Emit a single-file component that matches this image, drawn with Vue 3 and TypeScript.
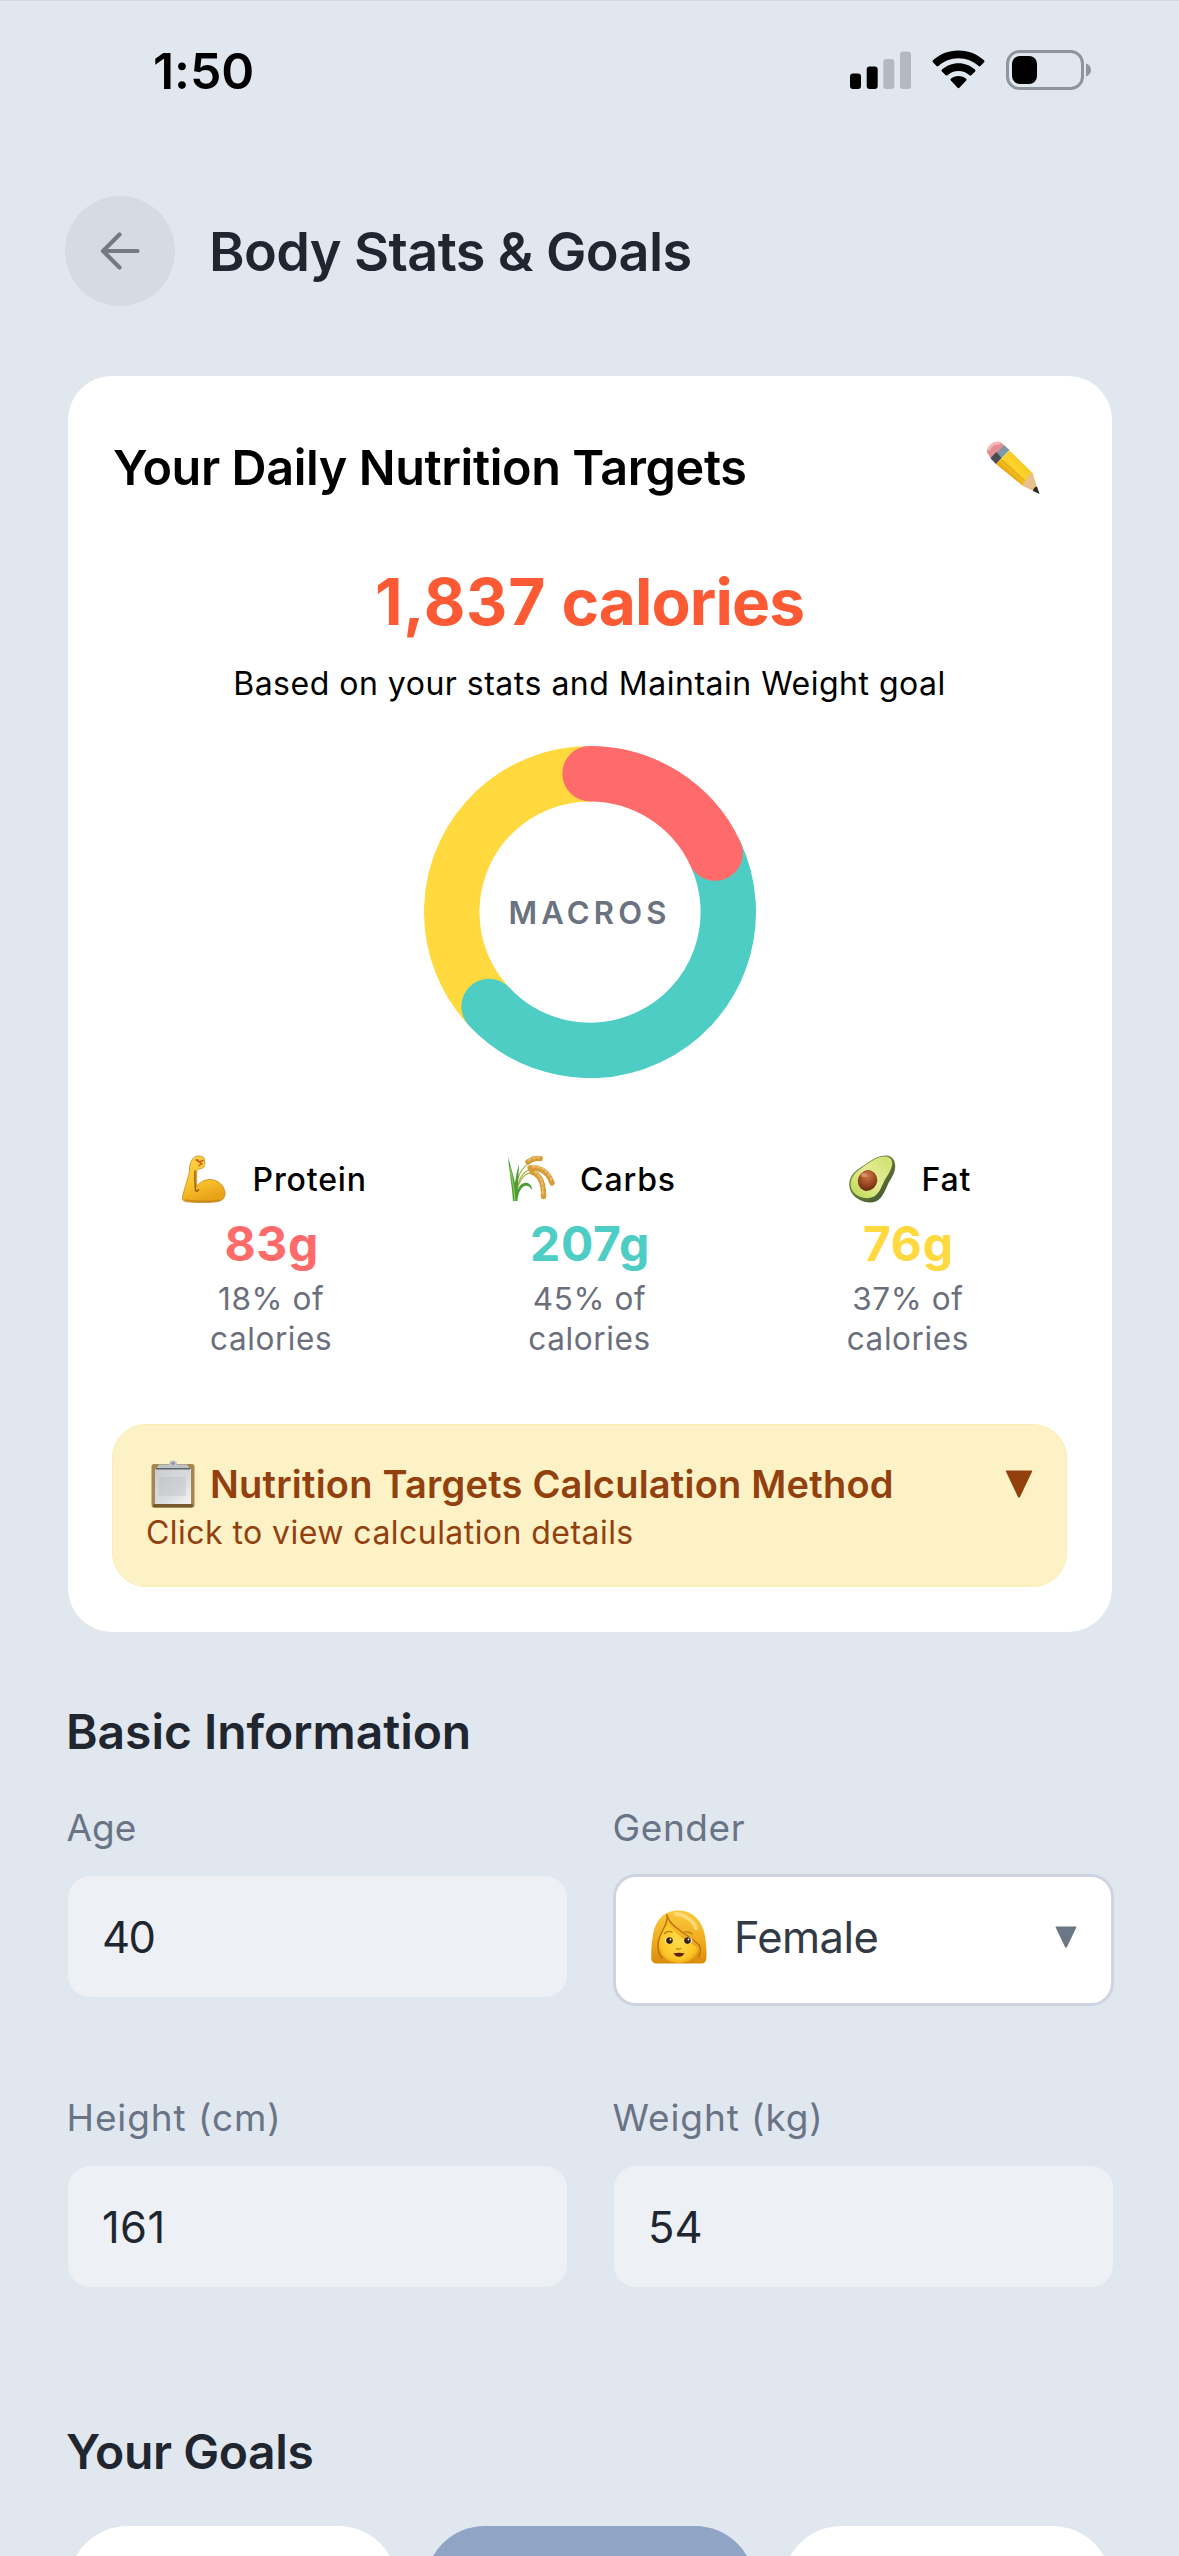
<script setup lang="ts">
interface Macro {
  key: 'protein' | 'carbs' | 'fat'
  label: string
  grams: number
  percent: number
  color: string
}

const macros: Macro[] = [
  { key: 'protein', label: 'Protein', grams: 83, percent: 18, color: '#ff6b6b' },
  { key: 'carbs', label: 'Carbs', grams: 207, percent: 45, color: '#4ecdc4' },
  { key: 'fat', label: 'Fat', grams: 76, percent: 37, color: '#ffd93d' },
]

const radius = 138.3
const circumference = 2 * Math.PI * radius

// Later segments are painted first so each rounded end overlaps the next segment.
const segments = macros
  .map((m, i) => {
    const before = macros.slice(0, i).reduce((sum, x) => sum + x.percent, 0)
    return {
      color: m.color,
      dash: `${(m.percent / 100) * circumference} ${circumference}`,
      rotate: -90 + before * 3.6,
    }
  })
  .reverse()

const goals = [
  { id: 'lose', active: false },
  { id: 'maintain', active: true },
  { id: 'gain', active: false },
]
</script>

<template>
  <div class="screen">
    <div class="status">
      <span class="time">1:50</span>
      <div class="status-icons">
        <svg class="signal" width="61" height="38" viewBox="0 0 61 38">
          <rect x="0" y="22.5" width="11" height="15.5" rx="3" fill="#000" />
          <rect x="16.7" y="15.5" width="11" height="22.5" rx="3" fill="#000" />
          <rect x="33.3" y="8" width="11" height="30" rx="3" fill="#b3b9c1" />
          <rect x="50" y="0.5" width="11" height="37.5" rx="3" fill="#b3b9c1" />
        </svg>
        <svg class="wifi" width="53" height="39" viewBox="0 0 53 39">
          <path d="M26.500 .5C36.500 .5 45.500 4.200 52 10.300c.6.600.6 1.300.1 1.900l-3.700 3.800c-.5.500-1.200.5-1.800 0C41.300 11.100 34.300 8.200 26.500 8.200S11.700 11.100 6.400 16c-.6.5-1.300.5-1.800 0L.9 12.200c-.5-.6-.5-1.300.1-1.900C7.500 4.200 16.500.5 26.500.5z" />
          <path d="M26.500 13.200c6.300 0 12.100 2.400 16.500 6.300.6.600.6 1.300.1 1.900l-3.800 3.800c-.5.500-1.200.5-1.800 0-2.900-2.600-6.800-4.200-11-4.200s-8.100 1.600-11 4.200c-.6.500-1.300.5-1.800 0l-3.800-3.800c-.5-.6-.5-1.300.1-1.900 4.400-3.900 10.200-6.300 16.500-6.300z" />
          <path d="M26.500 26c2.900 0 5.500 1 7.600 2.700.6.500.6 1.200.1 1.800l-6.800 7.300c-.5.600-1.300.6-1.800 0l-6.800-7.300c-.5-.6-.5-1.300.1-1.800 2.100-1.700 4.700-2.700 7.600-2.700z" />
        </svg>
        <svg class="battery" width="86" height="40" viewBox="0 0 86 40">
          <rect x="1.500" y="1.500" width="75" height="37" rx="12" fill="none" stroke="#8f959d" stroke-width="3" />
          <rect x="6" y="6" width="25" height="28" rx="8" fill="#000" />
          <path d="M80 13.500c3 1 5 3.500 5 6.500s-2 5.500-5 6.500z" fill="#8f959d" />
        </svg>
      </div>
    </div>

    <header class="header">
      <button class="back" aria-label="Back">
        <svg width="40" height="40" viewBox="0 0 40 40" fill="none" stroke="#737a83" stroke-width="4.200" stroke-linecap="round" stroke-linejoin="round">
          <path d="M37.500 20H3.500M19.500 3.500L3 20l16.500 16.500" />
        </svg>
      </button>
      <h1 class="title">Body Stats &amp; Goals</h1>
    </header>

    <section class="card">
      <div class="card-head">
        <h2 class="card-title">Your Daily Nutrition Targets</h2>
        <svg class="pencil" width="56" height="56" viewBox="0 0 56 56">
          <defs>
            <linearGradient id="pcBody" x1="0" y1="1" x2="1" y2="0">
              <stop offset="0" stop-color="#c98d0c" />
              <stop offset=".35" stop-color="#eaa90f" />
              <stop offset=".5" stop-color="#fbd32c" />
              <stop offset="1" stop-color="#f0bb14" />
            </linearGradient>
          </defs>
          <path d="M3 14C-1 9 8 0 15 2l5 4L7 20z" fill="#e58d90" />
          <path d="M4 9c2-4 6-6 10-6" stroke="#f6b9bb" stroke-width="3" fill="none" stroke-linecap="round" />
          <path d="M6 19L19 5l5.500 5L11 24z" fill="#7f98a8" />
          <path d="M5.500 18l6-6 5 6L11 24z" fill="#474d50" />
          <path d="M11 24L24.500 10.500 47.500 33 49 39 38 46z" fill="url(#pcBody)" />
          <path d="M15.500 19L42 43" stroke="#b87907" stroke-width="1" opacity=".5" />
          <path d="M38 46c0-4 1-5 3.500-5.500 0-4 2-6 6-7.500L54 53.500z" fill="#e8c08a" />
          <path d="M48 51c.5-2.500 1.500-4 4-4.500l2.500 7.500z" fill="#2e2a28" />
        </svg>
      </div>

      <div class="calories"><span class="num">1,837</span> <span class="unit">calories</span></div>
      <div class="based">Based on your stats and Maintain Weight goal</div>

      <div class="donut">
        <svg width="332" height="332" viewBox="-166 -166 332 332">
          <circle
            v-for="s in segments"
            :key="s.color"
            :r="radius"
            fill="none"
            :stroke="s.color"
            stroke-width="55.400"
            stroke-linecap="round"
            :stroke-dasharray="s.dash"
            :transform="`rotate(${s.rotate})`"
          />
        </svg>
        <span class="donut-label">MACROS</span>
      </div>

      <div class="macros">
        <div v-for="m in macros" :key="m.key" class="macro">
          <div class="macro-name" :class="m.key">
            <svg v-if="m.key === 'protein'" width="48" height="48" viewBox="0 0 48 48">
              <defs>
                <linearGradient id="armG" x1="0" y1="0" x2=".3" y2="1">
                  <stop offset="0" stop-color="#fdd04a" />
                  <stop offset=".6" stop-color="#fcc52b" />
                  <stop offset="1" stop-color="#e9a31b" />
                </linearGradient>
              </defs>
              <path d="M9.500 16C9 12 10.500 7 12.500 4 15 .500 19 .500 21.500 1.500c2.500 0 3.500 2.500 3 4.500 1 3 0 7-3 7.500-2 .5-4 .5-4.500 2-.5 5-.5 10-.2 16C19 28 24 24.500 30 24.500c8 0 14 6 15 12.500.5 5-2 8-5 9-8 2.500-27 1.500-33.500.8C3.500 46.500 2 45 2.500 42c1-6 5.500-18 7-26z" fill="url(#armG)" stroke="#c88a1e" stroke-width=".8" />
              <path d="M15 16c-.5 8 0 14 .5 19.500 1 1.500 2.500.5 3-1" fill="none" stroke="#99600f" stroke-width="1.500" stroke-linecap="round" />
              <path d="M5 45c9 1.500 26 2 35 0" fill="none" stroke="#b97c17" stroke-width="1.500" opacity=".7" />
              <path d="M16 5l3 2 4-1.500M17 4.500l4 4M22 8.500l-3 2" fill="none" stroke="#c4661a" stroke-width="1.500" stroke-linecap="round" />
            </svg>

            <svg v-else-if="m.key === 'carbs'" width="48" height="48" viewBox="0 0 48 48">
              <g fill="none" stroke="#a4b44a" stroke-width="1.200">
                <path d="M9 35C10 18 18 8 30 5" />
                <path d="M10 34c2-12 8-20 16-19 9 1 14 4 18 14" />
                <path d="M10 35c3-12 9-18 17-17 6 2 10 9 10 22" />
              </g>
              <path d="M6 46C5 30 2 15 1 2c3 10 5 17 7 26 1-7 2-13 4-19-.5 10-1 19-1.500 26 3-7 8-9 12-6 1.500 1 2.500 3 2.500 6-4-7-10-5-13 3-1 3-1.500 6-1.500 8z" fill="#4c9d35" />
              <path d="M3 12c2 10 4 20 5 34" stroke="#8bc85b" stroke-width="1.300" fill="none" />
              <g fill="none" stroke="#d79b37" stroke-width="5.400" stroke-linecap="round" stroke-dasharray="2.500 2.800">
                <path d="M21 7C25 4 29 2.500 35 4" />
                <path d="M23 13c9-1 18 3 22 15" />
                <path d="M25 17c8 3 12 11 11.500 26" />
              </g>
              <g fill="none" stroke="#e8bb67" stroke-width="2.500" stroke-linecap="round" stroke-dasharray="1.500 3">
                <path d="M22 5C26 2.500 30 2 34 2.500" />
                <path d="M26 11.500c8 0 15 4 18.500 13" />
                <path d="M28 17c6 4 8 10 8 22" />
              </g>
            </svg>

            <svg v-else width="48" height="48" viewBox="0 0 48 48">
              <defs>
                <linearGradient id="avSkin" x1="0" y1="0" x2="1" y2="1">
                  <stop offset="0" stop-color="#8aa548" />
                  <stop offset="1" stop-color="#3a4a2c" />
                </linearGradient>
                <linearGradient id="avFlesh" x1="0" y1="1" x2="1" y2="0">
                  <stop offset="0" stop-color="#b9d851" />
                  <stop offset=".5" stop-color="#e4ec92" />
                  <stop offset="1" stop-color="#cfe070" />
                </linearGradient>
                <radialGradient id="avPit" cx=".4" cy=".3" r=".75">
                  <stop offset="0" stop-color="#cb7a49" />
                  <stop offset=".6" stop-color="#97451f" />
                  <stop offset="1" stop-color="#642a12" />
                </radialGradient>
              </defs>
              <path d="M18 9C25 4 31 0 39 .500c5 .5 8.500 5 8.200 11C47 18 44 22 41 27c-3 6-5 13-10 17.500-5 4.500-14 3.500-20 0C4 41 0 34 1.500 26 3 18 10 14 18 9z" fill="url(#avSkin)" />
              <path d="M18.500 9.500C26 4.500 31 1 38 1.500c4.500.5 7 4 6 9-1 5-4 9-7 14-3 6-5 12-9 15.500-4.500 4-12 4-17.500 1C4.500 38 1.500 32 3 26 4.500 19 11.500 14.500 18.500 9.500z" fill="url(#avFlesh)" />
              <ellipse cx="19.500" cy="25.500" rx="9.600" ry="10.500" transform="rotate(25 19.500 25.500)" fill="url(#avPit)" />
              <ellipse cx="16" cy="20" rx="3" ry="2.200" fill="#e3a077" opacity=".7" />
            </svg>
            <span class="macro-label">{{ m.label }}</span>
          </div>
          <div class="macro-value" :style="{ color: m.color }">{{ m.grams }}g</div>
          <div class="macro-pct">{{ m.percent }}% of<br />calories</div>
        </div>
      </div>

      <div class="method">
        <div class="method-row">
          <svg class="clipboard" width="44" height="48" viewBox="0 0 44 48">
            <defs>
              <linearGradient id="cbPaper" x1="0" y1="0" x2="1" y2="1">
                <stop offset="0" stop-color="#c9ccd0" />
                <stop offset=".6" stop-color="#dcdde0" />
                <stop offset="1" stop-color="#f4f4f5" />
              </linearGradient>
            </defs>
            <rect x=".500" y="4" width="43" height="43.500" rx="2.500" fill="#a88650" />
            <rect x="2" y="44" width="40" height="3.500" rx="1.500" fill="#77592c" />
            <rect x="4" y="9" width="36" height="35" fill="url(#cbPaper)" />
            <rect x="8" y="17" width="27" height="19" fill="#b7babf" opacity=".35" />
            <path d="M5 9h34l-3-4.500H26C26 1.500 24.500.500 22 .500S18 1.500 18 4.500H8z" fill="#bcc3c8" />
            <circle cx="22" cy="3.500" r="1.400" fill="#83898d" />
            <rect x="5" y="8" width="34" height="1.500" fill="#5f6468" />
          </svg>
          <span class="method-title">Nutrition Targets Calculation Method</span>
          <svg class="tri" width="28" height="28" viewBox="0 0 28 28"><path d="M1.500 0.500h25q1 0 .6 1L15 27q-1 1.500-2 0L.900 1.500q-.4-1 .6-1z" fill="#92400e" /></svg>
        </div>
        <div class="method-sub">Click to view calculation details</div>
      </div>
    </section>

    <h2 class="section-title">Basic Information</h2>
    <div class="grid">
      <div class="field">
        <label class="l-age">Age</label>
        <div class="input"><span class="v-40">40</span></div>
      </div>
      <div class="field">
        <label class="l-gender">Gender</label>
        <div class="select">
          <svg class="woman" width="56" height="54" viewBox="0 0 56 54">
            <defs>
              <linearGradient id="hair" x1="0" y1="0" x2="0" y2="1">
                <stop offset="0" stop-color="#fbc93d" />
                <stop offset=".6" stop-color="#f0aa1d" />
                <stop offset="1" stop-color="#d98a0c" />
              </linearGradient>
              <radialGradient id="face" cx=".5" cy=".45" r=".6">
                <stop offset="0" stop-color="#ffdc4a" />
                <stop offset=".75" stop-color="#fcc727" />
                <stop offset="1" stop-color="#e6a012" />
              </radialGradient>
            </defs>
            <path d="M27 .500C44 .500 53 14 54.500 29c.7 8 1.500 14 .7 20-.3 3-2 4.500-5 4.500H6c-3.500 0-5.500-1.500-5.700-5C0 42 .5 33 2 25 4.500 10 13 .500 27 .500z" fill="url(#hair)" />
            <path d="M17 13c-7 7-9.500 16-9 24C9 46.500 17 53 28 53c11 0 18.500-6.500 19.500-15C39 33 24 25 17 13z" fill="url(#face)" />
            <path d="M16 5c3 13 20 18 32 30 2 3 1.500 8-.5 12" fill="none" stroke="#b8750f" stroke-width="1.400" stroke-linecap="round" />
            <path d="M16 5c2 10-8 17-9 29-.5 6 1 10 4 14" fill="none" stroke="#b8700b" stroke-width="1.400" stroke-linecap="round" />
            <path d="M25 4c9 1 17 6 20 14" fill="none" stroke="#ffe38a" stroke-width="4" stroke-linecap="round" opacity=".75" />
            <ellipse cx="18" cy="30.500" rx="4.200" ry="3.500" fill="#ffeeb8" />
            <ellipse cx="37" cy="30.500" rx="4.200" ry="3.500" fill="#ffeeb8" />
            <circle cx="18.500" cy="30.600" r="3.300" fill="#3a2108" />
            <circle cx="36.500" cy="30.600" r="3.300" fill="#3a2108" />
            <circle cx="19.500" cy="29.500" r=".9" fill="#fff" />
            <circle cx="37.500" cy="29.500" r=".9" fill="#fff" />
            <path d="M13.500 23.500c2-2 5-2.500 7.500-1.500M34 22c3-.5 5 0 7 2" stroke="#b87a12" stroke-width="1.300" fill="none" stroke-linecap="round" />
            <path d="M25.500 38.500q2 1.500 4 0" stroke="#c98b12" stroke-width="1.500" fill="none" stroke-linecap="round" />
            <path d="M22.500 43.300q5.500-1 11 0-2 3.500-5.500 3.500t-5.500-3.500z" fill="#5c2410" />
          </svg>
          <span class="female">Female</span>
          <svg class="tri" width="22" height="22" viewBox="0 0 22 22"><path d="M1.200.500h19.600q1 0 .5 1L12 21q-1 1.300-2 0L.700 1.500q-.5-1 .5-1z" fill="#6b7784" /></svg>
        </div>
      </div>
      <div class="field">
        <label class="l-height">Height (cm)</label>
        <div class="input"><span class="v-161">161</span></div>
      </div>
      <div class="field">
        <label class="l-weight">Weight (kg)</label>
        <div class="input"><span>54</span></div>
      </div>
    </div>

    <h2 class="section-title goals-title">Your Goals</h2>
    <div class="goals">
      <div v-for="g in goals" :key="g.id" class="goal" :class="{ active: g.active }"></div>
    </div>
  </div>
</template>

<style>
body {
  margin: 0;
  background: #e1e7ef;
}
</style>

<style scoped>
.screen {
  box-sizing: border-box;
  width: 1179px;
  height: 2556px;
  overflow: hidden;
  padding: 0 67px 0 68px;
  background: #e1e7ef;
  box-shadow: inset 0 1px 0 #d3dae3;
  font-family: Inter, 'Liberation Sans', sans-serif;
  color: #1f2630;
}
.screen * {
  box-sizing: border-box;
}
h1,
h2 {
  margin: 0;
  font-weight: 600;
}
svg {
  display: block;
  flex: none;
}
span,
label,
div {
  white-space: nowrap;
}

.status {
  display: flex;
  justify-content: space-between;
  align-items: center;
  height: 142px;
  padding: 0 20px 0 85px;
}
.time {
  font-size: 50px;
  line-height: 60px;
  font-weight: 600;
  letter-spacing: -0.1px;
  color: #000;
}
.status-icons {
  display: flex;
  align-items: center;
  margin-top: -3px;
}
.wifi {
  margin-left: 21px;
}
.battery {
  margin-left: 21px;
}

.header {
  display: flex;
  align-items: center;
  height: 110px;
  margin-top: 54px;
}
.back {
  display: flex;
  align-items: center;
  justify-content: center;
  width: 110px;
  height: 110px;
  margin-left: -3px;
  padding: 0;
  border: 0;
  border-radius: 50%;
  background: #d5dbe3;
}
.title {
  margin-left: 34px;
  padding-top: 1px;
  font-size: 54px;
  line-height: 70px;
  letter-spacing: -0.6px;
}

.card {
  height: 1256px;
  margin-top: 70px;
  padding: 62px 45px 0 44px;
  border-radius: 44px;
  background: #fff;
}
.card-head {
  display: flex;
  justify-content: space-between;
  align-items: center;
  height: 60px;
  padding: 0 26px 0 1px;
}
.card-title {
  font-size: 48.500px;
  line-height: 60px;
  letter-spacing: -0.38px;
  color: #000;
}
.calories {
  margin-top: 64px;
  text-align: center;
  font-size: 64px;
  line-height: 80px;
  font-weight: 700;
  color: #fb5a34;
}
.num {
  letter-spacing: 0.8px;
}
.unit {
  letter-spacing: -0.9px;
}
.based {
  margin-top: 20px;
  text-align: center;
  font-size: 32px;
  line-height: 44px;
  letter-spacing: 0.5px;
  color: #000;
}
.donut {
  display: grid;
  place-items: center;
  margin-top: 40px;
  height: 332px;
}
.donut > * {
  grid-area: 1 / 1;
}
.donut-label {
  padding-top: 2px;
  font-size: 31px;
  line-height: 40px;
  font-weight: 600;
  letter-spacing: 4.200px;
  color: #6b7280;
}
.macros {
  display: grid;
  grid-template-columns: repeat(3, 1fr);
  margin-top: 77px;
}
.macro {
  display: flex;
  flex-direction: column;
  align-items: center;
}
.macro-name {
  display: flex;
  align-items: center;
  gap: 25px;
  height: 48px;
  padding-left: 4px;
}
.macro-label {
  padding-top: 2px;
  font-size: 32px;
  font-weight: 500;
  line-height: 46px;
  letter-spacing: 0.85px;
  color: #000;
}
.macro-value {
  margin-top: 11px;
  font-size: 48px;
  line-height: 60px;
  font-weight: 700;
  letter-spacing: 0.6px;
  padding-left: 1px;
}
.macro-pct {
  margin-top: 5px;
  text-align: center;
  font-size: 31.500px;
  line-height: 39.500px;
  letter-spacing: 0.6px;
  color: #6b6f7c;
}
.method {
  height: 163px;
  margin-top: 66px;
  padding: 34px 33px 0 33px;
  border: 1px solid #fbeeb3;
  border-radius: 34px;
  background: #fdf2c6;
}
.method-row {
  display: flex;
  align-items: center;
  height: 50px;
}
.clipboard {
  margin-left: 5px;
}
.method-title {
  margin-left: 15px;
  flex: 1;
  font-size: 38px;
  line-height: 50px;
  font-weight: 600;
  letter-spacing: 0.22px;
  color: #92400e;
}
.method-sub {
  margin-top: 2px;
  font-size: 32px;
  line-height: 44px;
  letter-spacing: 0.45px;
  color: #92400e;
}

.section-title {
  margin: 70px 0 0 -2px;
  font-size: 48px;
  line-height: 60px;
  letter-spacing: -0.05px;
}
.grid {
  display: grid;
  grid-template-columns: 498.5px 498.5px;
  column-gap: 47.5px;
  align-items: start;
  margin-top: 42px;
  grid-template-rows: 290px 193px;
}
.field {
  display: flex;
  flex-direction: column;
}
.field label {
  margin-left: -1.5px;
  font-size: 37px;
  line-height: 48px;
  color: #697586;
}
.field .l-gender {
  letter-spacing: 0.6px;
}
.field .l-height,
.field .l-weight {
  letter-spacing: 0.9px;
}
.input {
  display: flex;
  align-items: center;
  height: 121px;
  margin-top: 24px;
  padding-left: 34px;
  border-radius: 22px;
  background: #edf0f5;
  font-size: 43.500px;
}
.v-40 {
  letter-spacing: -1.500px;
}
.v-161 {
  letter-spacing: 0.4px;
}
.select {
  display: flex;
  align-items: center;
  width: 501px;
  height: 132px;
  margin: 22px 0 0 -1px;
  padding: 0 34px 7px 35px;
  border: 3px solid #cfd3e0;
  border-radius: 23px;
  background: #fff;
  font-size: 43.500px;
  color: #323a45;
}
.female {
  flex: 1;
  margin-left: 27px;
  letter-spacing: -0.6px;
}
.goals-title {
  margin-top: 135px;
  letter-spacing: -0.4px;
}
.goals {
  display: grid;
  grid-template-columns: repeat(3, 1fr);
  gap: 27px;
  margin-top: 44px;
}
.goal {
  height: 120px;
  border-radius: 60px;
  background: #fff;
}
.goal.active {
  background: #90a4c5;
}
</style>
